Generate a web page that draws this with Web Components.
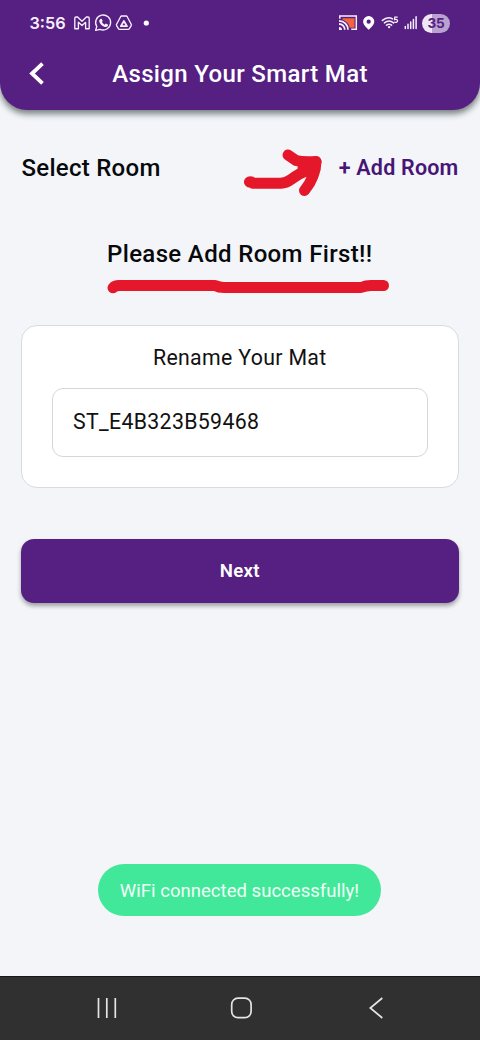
<!DOCTYPE html>
<html lang="en">
<head>
<meta charset="utf-8">
<title>Assign Your Smart Mat</title>
<style>
html,body{margin:0;height:100%}
body{background:#f3f5f9;font-family:Roboto,"Liberation Sans",sans-serif;color:#08090b;overflow:hidden}
</style>
</head>
<body>
<mat-screen>
  <mat-header slot="header">
    <status-bar slot="status" time="3:56" battery="35"></status-bar>
    Assign Your Smart Mat
  </mat-header>
  <room-row><span>Select Room</span><span slot="action">+ Add Room</span></room-row>
  <room-notice>Please Add Room First!!</room-notice>
  <rename-card value="ST_E4B323B59468">Rename Your Mat</rename-card>
  <primary-button>Next</primary-button>
  <toast-message slot="toast">WiFi connected successfully!</toast-message>
  <nav-bar slot="nav"></nav-bar>
  <pen-marks slot="marks"></pen-marks>
</mat-screen>
<script>
const define = (name, render) => customElements.define(name, class extends HTMLElement {
  connectedCallback() {
    if (this.shadowRoot) return;
    this.attachShadow({mode: 'open'}).innerHTML = render(this);
  }
});

define('mat-screen', () => `
<style>
:host{position:relative;display:flex;flex-direction:column;width:480px;height:1040px;overflow:hidden}
main{flex:1;display:flex;flex-direction:column;padding:42px 21.5px 0 21px;min-height:0}
.toast{display:flex;justify-content:center;margin:auto 0 60px}
</style>
<slot name="header"></slot>
<main><slot></slot><div class="toast"><slot name="toast"></slot></div></main>
<slot name="nav"></slot>
<slot name="marks"></slot>`);

define('mat-header', () => `
<style>
:host{display:flex;flex-direction:column;height:110px;box-sizing:border-box;background:#562083;color:#fff;border-radius:0 0 27px 27px;box-shadow:0 4px 6px rgba(20,30,30,.55)}
.bar{display:grid;grid-template-columns:72px 1fr 72px;align-items:center;height:56px}
svg{display:block;margin-left:28px}
.title{text-align:center;white-space:nowrap;font-size:24px;font-weight:500;letter-spacing:.35px;line-height:28px}
</style>
<slot name="status"></slot>
<div class="bar">
  <svg width="18" height="24" viewBox="0 0 18 24"><path d="M14.500 1.700 4 11.500 14.500 21.300" fill="none" stroke="#fff" stroke-width="3.800"/></svg>
  <div class="title"><slot></slot></div>
</div>`);

define('status-bar', el => `
<style>
:host{display:flex;align-items:center;height:46px;padding:0 30px 0 29.5px;color:#f6effc}
.time{font:600 16.3px/20px Inter,sans-serif;width:44.5px}
.left,.right{display:flex;align-items:center}
.right{margin-left:auto}
svg{display:block;flex:none}
.battery{width:28px;height:19px;border-radius:10px;background:linear-gradient(90deg,#eee6f5 0 35%,#b9a2cf 35%);color:#562083;font:700 13.6px/19px Inter,sans-serif;letter-spacing:-.3px;text-align:center}
</style>
<div class="left">
  <span class="time">${el.getAttribute('time')}</span>
  <svg width="76" height="20" viewBox="0 0 76 20" fill="none" stroke="#f6effc" stroke-width="1.350" stroke-linejoin="round" stroke-linecap="round">
    <path d="M.8 15.700V5.200Q.8 4 2 4h1.600L8 8.200 12.400 4H14q1.200 0 1.200 1.200v10.500h-3.600V9.300L8 12.600 4.400 9.300v6.400Z"/>
    <path d="M21.600 17.400l1.200-3.900a7.500 7.500 0 1 1 3.200 2.800Z"/>
    <path d="M26.400 5.900q.8-.6 1.400.2l.9 1.800-.8 1.200q.9 1.800 2.800 2.600l1.100-1.100 2 .9q.6.500.1 1.300-1.300 2-3.800.9-4-1.700-4.900-5.400-.1-1.600 1.200-2.400Z" fill="#f6effc" stroke="none"/>
    <path d="M47.700 3h4.400q.7 0 1.100.7l4 7.500q.4.700 0 1.400l-1.800 3.100q-.4.700-1.100.7h-8.800q-.7 0-1.100-.7l-1.800-3.100q-.4-.7 0-1.400l4-7.500q.4-.7 1.100-.7Z"/>
    <path d="M49.900 8 53 13.200h-6.200Z" stroke-width="1.700"/>
    <circle cx="72.300" cy="10" r="2.600" fill="#fff" stroke="none"/>
  </svg>
</div>
<div class="right">
  <svg width="84" height="20" viewBox="338 13 84 20" fill="none" stroke="#f6effc">
    <path d="M342.500 18.300h12v9.500h-4.700Q348.500 22 342.500 19.800Z" fill="#f2643d" stroke="none"/>
    <path d="M339.800 18.800v-2.700h16.500v13.200h-5.100" stroke-width="1.500"/>
    <path d="M339 20.800a9 9 0 0 1 9 9M339 24a5.800 5.800 0 0 1 5.800 5.800" stroke-width="1.800"/>
    <path d="M339 27a3 3 0 0 1 3 3h-3Z" fill="#f6effc" stroke="none"/>
    <path d="M368.700 16a5.600 5.600 0 0 0-5.600 5.600c0 3.800 5.600 8.200 5.600 8.200s5.600-4.400 5.600-8.200a5.600 5.600 0 0 0-5.600-5.600Zm0 3.600a2.100 2.100 0 1 1 0 4.200 2.100 2.100 0 0 1 0-4.200Z" fill="#fff" stroke="none"/>
    <path d="M382.400 20.400q5.200-4.500 10.200-1.500M384.400 22.900q4.700-3.700 9.200 0M386.500 25.200q2.600-1.900 5.100 0" stroke-width="1.500" stroke-linecap="round"/>
    <circle cx="389.100" cy="27.100" r="1.200" fill="#f6effc" stroke="none"/>
    <path d="M397.700 17.200h-2.900l-.2 2.400q2.900-.7 3 1.200-.1 2.100-3.300 1.400" stroke-width="1.250"/>
    <path d="M405.300 26.500v2M408 24.300v4.200M410.700 21.900v6.600M413.400 19.400v9.100M416.100 16.800v11.700" stroke-width="1.500" stroke-linecap="round"/>
  </svg>
  <span class="battery">${el.getAttribute('battery')}</span>
</div>`);

define('room-row', () => `
<style>
:host{display:flex;justify-content:space-between;align-items:center;height:31px;padding:0 0 0 .5px;font-size:24px;font-weight:500;letter-spacing:.27px;line-height:32px}
.action{font-size:21.5px;font-weight:600;letter-spacing:.2px;color:#471577;line-height:31px}
</style>
<slot></slot><span class="action"><slot name="action"></slot></span>`);

define('room-notice', () => `
<style>
:host{display:block;margin-top:56px;height:31px;line-height:30px;text-align:center;font-size:24px;font-weight:500;letter-spacing:.35px}
</style><slot></slot>`);

define('rename-card', el => `
<style>
:host{display:block;box-sizing:border-box;height:163px;margin:55px 0 0;padding:18px 30px 0;background:#fff;border:1px solid #d9dbe1;border-radius:16px;font-size:21.3px;letter-spacing:.33px;color:#111}
.label{line-height:28px;text-align:center}
.field{box-sizing:border-box;height:69px;margin-top:16px;padding-left:20px;border:1px solid #d5d7da;border-radius:11px;line-height:66px}
</style>
<div class="label"><slot></slot></div>
<div class="field">${el.getAttribute('value')}</div>`);

define('primary-button', () => `
<style>
:host{display:flex;align-items:center;justify-content:center;height:64px;margin-top:50.5px;background:#562083;color:#fff;border-radius:13px;box-shadow:0 3px 4px rgba(20,20,20,.38);font-size:18.7px;font-weight:600;letter-spacing:.25px}
</style><slot></slot>`);

define('toast-message', () => `
<style>
:host{display:block;box-sizing:border-box;width:283px;height:52px;margin-right:.5px;border-radius:26px;background:#42e89a;color:#f0fff7;text-align:center;font-size:18.5px;letter-spacing:.03px;line-height:54px;white-space:nowrap}
</style><slot></slot>`);

define('nav-bar', () => `
<style>
:host{display:grid;grid-template-columns:repeat(3,135px);justify-content:center;justify-items:center;box-sizing:border-box;height:64px;padding:20px 0 0 1px;background:#303030;border-top:1px solid #17191b}
svg{display:block;fill:none;stroke:#e4e4e4;stroke-width:1.7}
</style>
<svg width="24" height="24" viewBox="0 0 24 24"><path d="M4.500 1v20M12.800 1v20M21.300 1v20"/></svg>
<svg width="24" height="24" viewBox="0 0 24 24"><rect x="2.700" y="1.200" width="19.400" height="19.400" rx="6.200"/></svg>
<svg width="24" height="24" viewBox="0 0 24 24"><path d="M18.300 1 6.300 11l12 10"/></svg>`);

define('pen-marks', () => `
<style>
:host{position:absolute;inset:0;pointer-events:none}
svg{display:block}
</style>
<svg width="480" height="310" viewBox="0 0 480 310" fill="none" stroke="#e5182b" stroke-width="11" stroke-linecap="round" stroke-linejoin="round">
  <path d="M249.500 182Q251 181.300 253 183.300H281Q286 183 291 179.500Q300 173 306 171L316 162"/>
  <path d="M288 155 296 160.500Q303 162.500 316 161.500Q316 169 313 176 310 184 304.500 190.500"/>
  <path d="M303 168 314 163 309 172"/>
  <path d="M113 287.800Q115 285.500 119 285.500H215Q219 287.500 224 287.500H361Q366 285.500 371 285.500H383.500"/>
</svg>`);
</script>
</body>
</html>
